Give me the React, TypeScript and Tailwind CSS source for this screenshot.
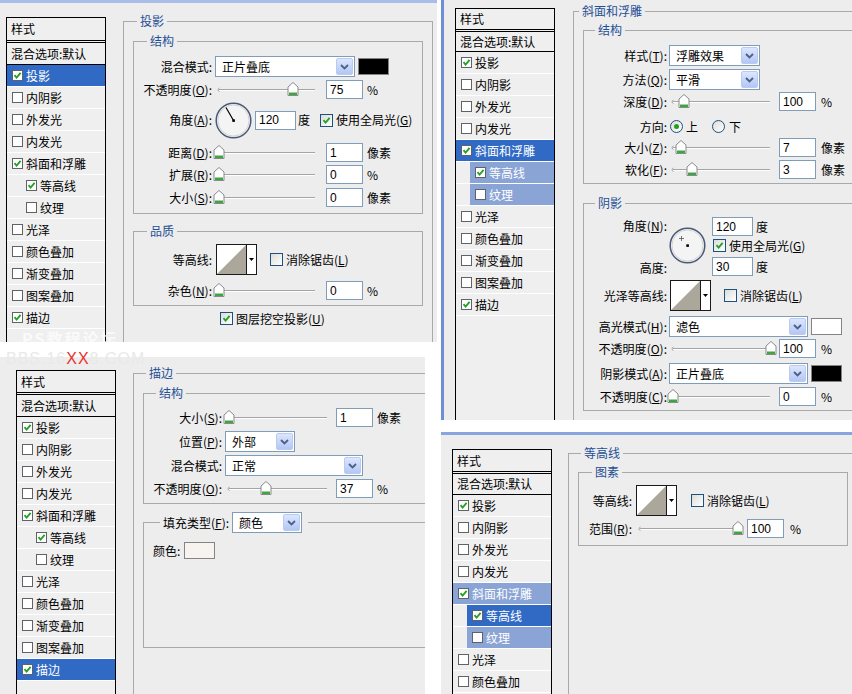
import React from "react";

type Sel = "dark" | "light" | undefined;

const LAYERS: { name: string; sub?: boolean; on: boolean }[] = [
  { name: "投影", on: true },
  { name: "内阴影", on: false },
  { name: "外发光", on: false },
  { name: "内发光", on: false },
  { name: "斜面和浮雕", on: true },
  { name: "等高线", sub: true, on: true },
  { name: "纹理", sub: true, on: false },
  { name: "光泽", on: false },
  { name: "颜色叠加", on: false },
  { name: "渐变叠加", on: false },
  { name: "图案叠加", on: false },
  { name: "描边", on: true },
];

// label with an underlined access key, e.g. 不透明度(O):
const m = (t: string, k: string, colon = true) => (
  <>
    {t}(<u>{k}</u>){colon ? ":" : ""}
  </>
);

function Mark() {
  return (
    <svg width="9" height="9" viewBox="0 0 9 9" className="block">
      <path d="M1.5 4.2 L3.6 6.6 L7.6 1.8" fill="none" stroke="#22a022" strokeWidth="1.8" />
    </svg>
  );
}

function ListBox({ on }: { on: boolean }) {
  return (
    <div className="w-[11px] h-[11px] shrink-0 border border-[#5f6368] bg-white flex items-center justify-center">
      {on && <Mark />}
    </div>
  );
}

function Check({ on, className = "" }: { on: boolean; className?: string }) {
  return (
    <div
      className={`w-[13px] h-[13px] shrink-0 border border-[#1c5180] bg-linear-to-br from-[#dcdcd7] to-white flex items-center justify-center ${className}`}
    >
      {on && <Mark />}
    </div>
  );
}

function Radio({ on, className = "" }: { on: boolean; className?: string }) {
  return (
    <div
      className={`w-[13px] h-[13px] shrink-0 rounded-full border border-[#1c5180] bg-linear-to-br from-[#dcdcd7] to-white flex items-center justify-center ${className}`}
    >
      {on && <div className="w-[5px] h-[5px] rounded-full bg-[#21a121]" />}
    </div>
  );
}

function StyleList({
  sel,
  head,
  mix,
  className,
}: {
  sel: Record<string, Sel>;
  head: string;
  mix: string;
  className: string;
}) {
  return (
    <div
      className={`w-[100px] shrink-0 self-stretch flex flex-col border border-b-0 border-black bg-[#efefef] ${className}`}
    >
      <div className={`${head} shrink-0 flex items-center pl-[4px] border-b-[3px] border-double border-black`}>
        样式
      </div>
      <div className={`${mix} shrink-0 flex items-center pl-[4px] border-b border-black`}>混合选项:默认</div>
      {LAYERS.map((l) => {
        const s = sel[l.name];
        const bg =
          s === "dark" ? "bg-[#316ac5] text-white" : s === "light" ? "bg-[#8ba4d6] text-white" : "";
        return (
          <div key={l.name} className="h-[22px] shrink-0 flex border-b border-white">
            <div className={`flex-1 flex items-center gap-[3px] pl-[5px] ${l.sub ? "ml-[14px]" : ""} ${bg}`}>
              <ListBox on={l.on} />
              <span>{l.name}</span>
            </div>
          </div>
        );
      })}
    </div>
  );
}

function Group({
  className,
  ml,
  title,
  children,
}: {
  className: string;
  ml: string;
  title: React.ReactNode;
  children?: React.ReactNode;
}) {
  return (
    <fieldset className={`shrink-0 min-w-0 border border-[#a9a9a9] ${className}`}>
      <legend className={`${ml} px-[3px] leading-[14px] text-[#1f4f95]`}>{title}</legend>
      {children}
    </fieldset>
  );
}

function Row({
  label,
  lw,
  className,
  children,
}: {
  label: React.ReactNode;
  lw: string;
  className: string;
  children?: React.ReactNode;
}) {
  return (
    <div className={`flex items-center ${className}`}>
      <div className={`${lw} shrink-0 text-right whitespace-nowrap`}>{label}</div>
      {children}
    </div>
  );
}

function Select({ v, className }: { v: string; className: string }) {
  return (
    <div className={`h-[21px] shrink-0 border border-[#7f9db9] bg-white flex items-center pl-[6px] pr-[1px] ${className}`}>
      <span>{v}</span>
      <div className="ml-auto w-[17px] h-[17px] rounded-[2px] border border-[#b9cbf3] bg-linear-to-b from-[#dce6fd] to-[#b3c7f5] flex items-center justify-center">
        <svg width="9" height="6" viewBox="0 0 9 6" className="block">
          <path d="M1 1 L4.5 4.5 L8 1" fill="none" stroke="#4d6185" strokeWidth="1.8" />
        </svg>
      </div>
    </div>
  );
}

function Num({ v, className }: { v: string; className: string }) {
  return (
    <div
      className={`h-[19px] shrink-0 border border-[#7f9db9] bg-white flex items-center pl-[3px] font-['Liberation_Sans',sans-serif] ${className}`}
    >
      {v}
    </div>
  );
}

function Swatch({ className }: { className: string }) {
  return <div className={`w-[31px] h-[17px] shrink-0 border border-[#848484] ${className}`} />;
}

function Slider({ w, at, className = "" }: { w: number; at: number; className?: string }) {
  return (
    <svg width={w} height={19} overflow="visible" className={`block shrink-0 ${className}`}>
      <line x1={4} y1={9.5} x2={w} y2={9.5} stroke="#a4a4a4" />
      <line x1={4} y1={10.5} x2={w} y2={10.5} stroke="#ffffff" />
      <path d="M4.5 8 A1.8 1.8 0 0 0 4.5 11.5" fill="none" stroke="#a4a4a4" />
      <path d={`M${at - 5} 15.5 V7 L${at} 2.5 L${at + 5} 7 V15.5 Z`} fill="#ffffff" stroke="#8a8a8a" />
      <rect x={at - 4} y={12.5} width={8} height={2.5} fill="#3ea63e" />
    </svg>
  );
}

function Dial({ line, className = "" }: { line?: boolean; className?: string }) {
  return (
    <svg width={37} height={37} className={`block shrink-0 ${className}`}>
      <circle cx={18.5} cy={18.5} r={17.3} fill="#f4f4f4" stroke="#4a5977" strokeWidth={1.5} />
      <circle cx={18.5} cy={18.5} r={15.6} fill="none" stroke="#d2d2d2" />
      {line ? (
        <line x1={18.5} y1={18.5} x2={11} y2={5.5} stroke="#000" strokeWidth={1.2} />
      ) : (
        <path d="M12.5 9 V14 M10 11.5 H15" stroke="#555" strokeWidth={0.8} />
      )}
      <rect x={17.3} y={17.3} width={2.6} height={2.6} fill="#000" />
    </svg>
  );
}

function Contour({ className = "" }: { className?: string }) {
  return (
    <div className={`w-[41px] h-[31px] shrink-0 border border-[#1a1a1a] bg-white flex ${className}`}>
      <svg width={29} height={29} className="block">
        <polygon points="0,29 29,0 29,29" fill="#aca79b" />
      </svg>
      <div className="flex-1 border-l border-[#1a1a1a] flex items-center justify-center">
        <svg width={5} height={3} className="block">
          <polygon points="0,0 5,0 2.5,3" fill="#000" />
        </svg>
      </div>
    </div>
  );
}

function DropShadowPanel() {
  return (
    <div className="w-[437px] h-[342px] shrink-0 flex overflow-hidden bg-[#ededed] border-t-[3px] border-[#a8bde7]">
      <StyleList className="ml-[6px] mt-[14px]" head="h-[25px]" mix="h-[22px]" sel={{ 投影: "dark" }} />
      <Group className="ml-[17px] mt-[11px] w-[310px] h-[360px]" ml="ml-[13px]" title="投影">
        <Group className="ml-[9px] mt-[6px] w-[290px] h-[180px]" ml="ml-[13px]" title="结构">
          <Row lw="w-[78px]" className="mt-[8px] h-[21px]" label="混合模式:">
            <Select v="正片叠底" className="ml-[3px] w-[140px]" />
            <Swatch className="ml-[3px] bg-black" />
          </Row>
          <Row lw="w-[78px]" className="mt-[3px] h-[19px]" label={m("不透明度", "O")}>
            <Slider className="ml-[3px]" w={100} at={78} />
            <Num v="75" className="ml-[11px] w-[37px]" />
            <span className="ml-[4px]">%</span>
          </Row>
          <Row lw="w-[78px]" className="mt-[2px] h-[38px]" label={m("角度", "A")}>
            <Dial className="ml-[3px]" line />
            <Num v="120" className="ml-[3px] w-[41px]" />
            <span className="ml-[2px]">度</span>
            <Check on className="ml-[10px]" />
            <span className="ml-[3px]">使用全局光(<u>G</u>)</span>
          </Row>
          <Row lw="w-[78px]" className="mt-[4px] h-[19px]" label={m("距离", "D")}>
            <Slider className="ml-[3px]" w={100} at={4} />
            <Num v="1" className="ml-[11px] w-[37px]" />
            <span className="ml-[4px]">像素</span>
          </Row>
          <Row lw="w-[78px]" className="mt-[3px] h-[19px]" label={m("扩展", "R")}>
            <Slider className="ml-[3px]" w={100} at={4} />
            <Num v="0" className="ml-[11px] w-[37px]" />
            <span className="ml-[4px]">%</span>
          </Row>
          <Row lw="w-[78px]" className="mt-[4px] h-[19px]" label={m("大小", "S")}>
            <Slider className="ml-[3px]" w={100} at={4} />
            <Num v="0" className="ml-[11px] w-[37px]" />
            <span className="ml-[4px]">像素</span>
          </Row>
        </Group>
        <Group className="ml-[9px] mt-[10px] w-[290px] h-[82px]" ml="ml-[13px]" title="品质">
          <Row lw="w-[78px]" className="mt-[6px] h-[31px]" label="等高线:">
            <Contour className="ml-[4px]" />
            <Check on={false} className="ml-[13px]" />
            <span className="ml-[3px]">消除锯齿(<u>L</u>)</span>
          </Row>
          <Row lw="w-[78px]" className="mt-[6px] h-[19px]" label={m("杂色", "N")}>
            <Slider className="ml-[3px]" w={100} at={4} />
            <Num v="0" className="ml-[11px] w-[37px]" />
            <span className="ml-[4px]">%</span>
          </Row>
        </Group>
        <div className="mt-[6px] ml-[96px] h-[13px] flex items-center">
          <Check on />
          <span className="ml-[3px]">图层挖空投影(<u>U</u>)</span>
        </div>
      </Group>
    </div>
  );
}

function BevelPanel() {
  return (
    <div className="w-[411px] h-[420px] shrink-0 flex overflow-hidden bg-[#ededed] border-l-[3px] border-[#6f8ed6]">
      <StyleList
        className="ml-[11px] mt-[8px]"
        head="h-[23px]"
        mix="h-[20px]"
        sel={{ 斜面和浮雕: "dark", 等高线: "light", 纹理: "light" }}
      />
      <Group className="ml-[18px] mt-[4px] w-[300px] h-[430px]" ml="ml-[5px]" title="斜面和浮雕">
        <Group className="ml-[9px] mt-[5px] w-[290px] h-[161px]" ml="ml-[11px]" title="结构">
          <Row lw="w-[83px]" className="mt-[8px] h-[21px]" label={m("样式", "T")}>
            <Select v="浮雕效果" className="ml-[2px] w-[91px]" />
          </Row>
          <Row lw="w-[83px]" className="mt-[3px] h-[21px]" label={m("方法", "Q")}>
            <Select v="平滑" className="ml-[2px] w-[91px]" />
          </Row>
          <Row lw="w-[83px]" className="mt-[2px] h-[19px]" label={m("深度", "D")}>
            <Slider className="ml-[2px]" w={101} at={15} />
            <Num v="100" className="ml-[9px] w-[37px]" />
            <span className="ml-[5px]">%</span>
          </Row>
          <Row lw="w-[83px]" className="mt-[6px] h-[19px]" label="方向:">
            <Radio on className="ml-[3px]" />
            <span className="ml-[3px]">上</span>
            <Radio on={false} className="ml-[14px]" />
            <span className="ml-[4px]">下</span>
          </Row>
          <Row lw="w-[83px]" className="mt-[2px] h-[19px]" label={m("大小", "Z")}>
            <Slider className="ml-[2px]" w={101} at={12} />
            <Num v="7" className="ml-[9px] w-[37px]" />
            <span className="ml-[5px]">像素</span>
          </Row>
          <Row lw="w-[83px]" className="mt-[3px] h-[19px]" label={m("软化", "F")}>
            <Slider className="ml-[2px]" w={101} at={23} />
            <Num v="3" className="ml-[9px] w-[37px]" />
            <span className="ml-[5px]">像素</span>
          </Row>
        </Group>
        <Group className="ml-[9px] mt-[12px] w-[290px] h-[215px]" ml="ml-[11px]" title="阴影">
          <div className="mt-[7px] h-[60px] flex">
            <div className="w-[83px] shrink-0 flex flex-col justify-between items-end pt-[2px] pb-[2px]">
              <span>{m("角度", "N")}</span>
              <span>高度:</span>
            </div>
            <Dial className="ml-[2px] mt-[10px]" />
            <div className="ml-[6px] flex flex-col">
              <div className="h-[19px] flex items-center">
                <Num v="120" className="w-[41px]" />
                <span className="ml-[3px]">度</span>
              </div>
              <div className="mt-[3px] h-[13px] flex items-center">
                <Check on className="ml-[1px]" />
                <span className="ml-[3px]">使用全局光(<u>G</u>)</span>
              </div>
              <div className="mt-[5px] h-[19px] flex items-center">
                <Num v="30" className="w-[41px]" />
                <span className="ml-[3px]">度</span>
              </div>
            </div>
          </div>
          <Row lw="w-[83px]" className="mt-[3px] h-[31px]" label="光泽等高线:">
            <Contour className="ml-[3px]" />
            <Check on={false} className="ml-[13px]" />
            <span className="ml-[3px]">消除锯齿(<u>L</u>)</span>
          </Row>
          <Row lw="w-[83px]" className="mt-[5px] h-[21px]" label={m("高光模式", "H")}>
            <Select v="滤色" className="ml-[2px] w-[139px]" />
            <Swatch className="ml-[3px] bg-white" />
          </Row>
          <Row lw="w-[83px]" className="mt-[2px] h-[19px]" label={m("不透明度", "O")}>
            <Slider className="ml-[2px]" w={101} at={102} />
            <Num v="100" className="ml-[9px] w-[37px]" />
            <span className="ml-[5px]">%</span>
          </Row>
          <Row lw="w-[83px]" className="mt-[5px] h-[21px]" label={m("阴影模式", "A")}>
            <Select v="正片叠底" className="ml-[2px] w-[139px]" />
            <Swatch className="ml-[3px] bg-black" />
          </Row>
          <Row lw="w-[83px]" className="mt-[3px] h-[19px]" label={m("不透明度", "C")}>
            <Slider className="ml-[2px]" w={101} at={4} />
            <Num v="0" className="ml-[9px] w-[37px]" />
            <span className="ml-[5px]">%</span>
          </Row>
        </Group>
      </Group>
    </div>
  );
}

function StrokePanel() {
  return (
    <div className="w-[425px] flex-1 flex overflow-hidden bg-[#ededed]">
      <StyleList className="ml-[16px] mt-[13px]" head="h-[24px]" mix="h-[22px]" sel={{ 描边: "dark" }} />
      <Group className="ml-[17px] mt-[9px] w-[300px] h-[340px]" ml="ml-[12px]" title="描边">
        <Group className="ml-[9px] mt-[6px] w-[290px] h-[118px]" ml="ml-[12px]" title="结构">
          <Row lw="w-[78px]" className="mt-[8px] h-[19px]" label={m("大小", "S")}>
            <Slider className="ml-[3px]" w={102} at={4} />
            <Num v="1" className="ml-[9px] w-[37px]" />
            <span className="ml-[4px]">像素</span>
          </Row>
          <Row lw="w-[78px]" className="mt-[4px] h-[21px]" label={m("位置", "P")}>
            <Select v="外部" className="ml-[3px] w-[70px]" />
          </Row>
          <Row lw="w-[78px]" className="mt-[3px] h-[21px]" label="混合模式:">
            <Select v="正常" className="ml-[3px] w-[138px]" />
          </Row>
          <Row lw="w-[78px]" className="mt-[3px] h-[19px]" label={m("不透明度", "O")}>
            <Slider className="ml-[3px]" w={102} at={41} />
            <Num v="37" className="ml-[9px] w-[37px]" />
            <span className="ml-[4px]">%</span>
          </Row>
        </Group>
        <fieldset className="shrink-0 min-w-0 ml-[9px] mt-[8px] w-[290px] h-[136px] border border-[#a9a9a9]">
          <legend className="ml-[16px] pl-[3px] pr-[6px] flex items-center">
            <span>{m("填充类型", "F")}</span>
            <Select v="颜色" className="ml-[3px] w-[70px]" />
          </legend>
          <div className="mt-[9px] ml-[9px] h-[17px] flex items-center">
            <span>颜色:</span>
            <Swatch className="ml-[4px] bg-[#f7f3ee]" />
          </div>
        </fieldset>
      </Group>
    </div>
  );
}

function ContourPanel() {
  return (
    <div className="w-[411px] flex-1 flex overflow-hidden bg-[#ededed] border-t-[3px] border-[#8aa5dd]">
      <StyleList
        className="ml-[11px] mt-[14px]"
        head="h-[24px]"
        mix="h-[21px]"
        sel={{ 斜面和浮雕: "light", 等高线: "dark", 纹理: "light" }}
      />
      <Group className="ml-[16px] mt-[11px] w-[300px] h-[300px]" ml="ml-[12px]" title="等高线">
        <Group className="ml-[9px] mt-[5px] w-[270px] h-[81px]" ml="ml-[13px]" title="图素">
          <Row lw="w-[53px]" className="mt-[6px] h-[31px]" label="等高线:">
            <Contour className="ml-[4px]" />
            <Check on={false} className="ml-[14px]" />
            <span className="ml-[3px]">消除锯齿(<u>L</u>)</span>
          </Row>
          <Row lw="w-[53px]" className="mt-[3px] h-[19px]" label={m("范围", "R")}>
            <Slider className="ml-[4px]" w={101} at={102} />
            <Num v="100" className="ml-[10px] w-[37px]" />
            <span className="ml-[6px]">%</span>
          </Row>
        </Group>
      </Group>
    </div>
  );
}

export default function App() {
  return (
    <div className="relative w-[852px] h-[694px] overflow-hidden bg-white flex text-[12px] leading-[14px] text-black font-['Noto_Sans_CJK_SC',sans-serif]">
      <div className="w-[441px] shrink-0 flex flex-col">
        <DropShadowPanel />
        <div className="h-[15px] shrink-0" />
        <StrokePanel />
      </div>
      <div className="w-[411px] shrink-0 flex flex-col">
        <BevelPanel />
        <div className="h-[12px] shrink-0" />
        <ContourPanel />
      </div>
      {/* forum watermark over the seam */}
      <div className="absolute left-[22px] top-[330px] text-[16px] leading-[16px] font-bold tracking-[2px] text-white/70">
        PS教程论坛
      </div>
      <div className="absolute left-[6px] top-[351px] text-[16px] leading-[16px] tracking-[1px] text-[#e9e9e9] font-['Liberation_Sans',sans-serif]">
        BBS.16<span className="text-[#e8322b]">XX</span>8.COM
      </div>
    </div>
  );
}
